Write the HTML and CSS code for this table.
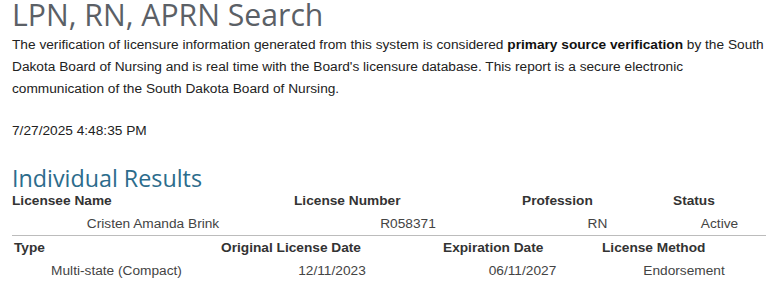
FILE: index.html
```html
<!DOCTYPE html>
<html>
<head>
<meta charset="utf-8">
<link rel="stylesheet" href="styles.css">
</head>
<body>
<div class="page">
  <h1 class="title">LPN, RN, APRN Search</h1>
  <p class="intro">The verification of licensure information generated from this system is considered <b>primary source verification</b> by the South Dakota Board of Nursing and is real time with the Board's licensure database. This report is a secure electronic communication of the South Dakota Board of Nursing.</p>
  <p class="stamp">7/27/2025 4:48:35 PM</p>
  <h2 class="section">Individual Results</h2>
  <div class="grid grid-a">
    <div class="th">Licensee Name</div>
    <div class="th">License Number</div>
    <div class="th">Profession</div>
    <div class="th">Status</div>
    <div class="td">Cristen Amanda Brink</div>
    <div class="td">R058371</div>
    <div class="td">RN</div>
    <div class="td">Active</div>
  </div>
  <div class="grid grid-b">
    <div class="th">Type</div>
    <div class="th">Original License Date</div>
    <div class="th">Expiration Date</div>
    <div class="th">License Method</div>
    <div class="td">Multi-state (Compact)</div>
    <div class="td">12/11/2023</div>
    <div class="td">06/11/2027</div>
    <div class="td">Endorsement</div>
  </div>
</div>
</body>
</html>
```

FILE: styles.css
```css
html, body {
  margin: 0;
  padding: 0;
  background: #ffffff;
}
.page {
  padding: 0 8px 0 12px;
  font-family: "Liberation Sans", Arial, sans-serif;
  font-size: 13.7px;
  color: #222222;
}
.title {
  font-family: "Open Sans", sans-serif;
  font-weight: 400;
  font-size: 30.2px;
  line-height: 30px;
  color: #5b6066;
  margin: 0;
}
.intro {
  margin: 4px 0 0 0;
  line-height: 22px;
}
.intro b {
  color: #111111;
}
.stamp {
  margin: 20px 0 0 0;
  line-height: 22px;
}
.section {
  font-family: "Open Sans", sans-serif;
  font-weight: 400;
  font-size: 23.3px;
  line-height: 22px;
  color: #2c6c8c;
  margin: 25px 0 0 0;
}
.grid {
  display: grid;
  line-height: 23px;
}
.grid-a {
  grid-template-columns: 282px 228px 151px 1fr;
  border-bottom: 1px solid #bcbcbc;
}
.grid-b {
  grid-template-columns: 209px 222px 159px 1fr;
}
.th {
  font-weight: 700;
  color: #333333;
  text-align: left;
}
.grid-b .th:first-child {
  padding-left: 2px;
}
.td {
  text-align: center;
  color: #444444;
}
```
